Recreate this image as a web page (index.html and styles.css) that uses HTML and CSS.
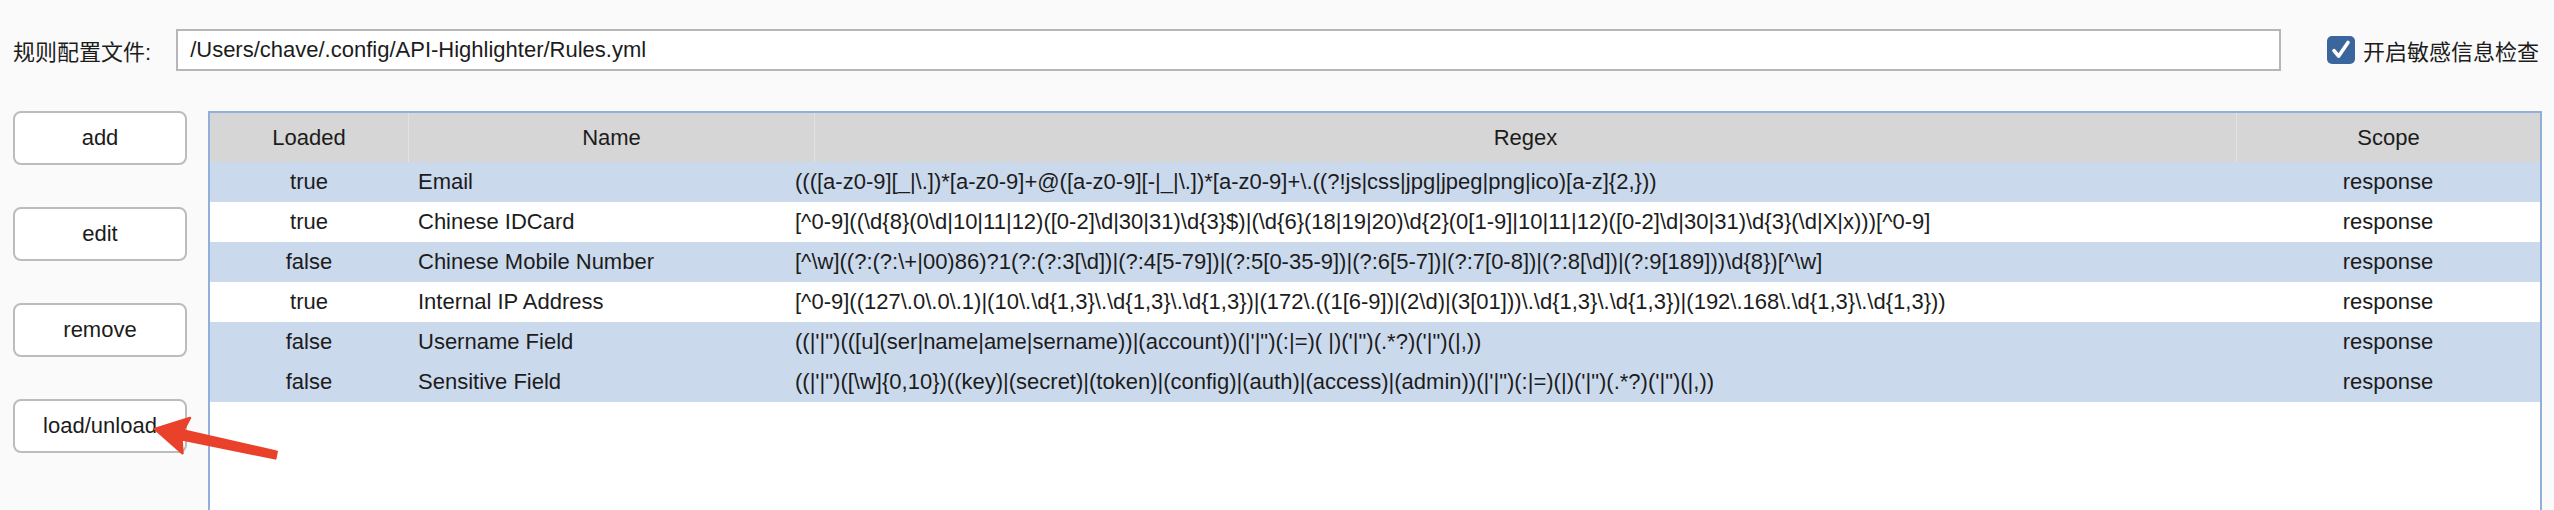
FILE: index.html
```html
<!DOCTYPE html>
<html lang="zh">
<head>
<meta charset="utf-8">
<title>API-Highlighter Rules</title>
<link rel="stylesheet" href="styles.css">
</head>
<body>
<div class="topbar">
  <span class="label">规则配置文件:</span>
  <div class="path-input">/Users/chave/.config/API-Highlighter/Rules.yml</div>
  <label class="check">
    <span class="box"><svg viewBox="0 0 28 28" width="28" height="28"><path d="M7 14.6 L11.6 20.2 L21 6.4" fill="none" stroke="#fff" stroke-width="3.6" stroke-linecap="round" stroke-linejoin="round"/></svg></span>
    <span class="check-text">开启敏感信息检查</span>
  </label>
</div>
<div class="main">
  <div class="buttons">
    <div class="btn">add</div>
    <div class="btn">edit</div>
    <div class="btn">remove</div>
    <div class="btn">load/unload</div>
  </div>
  <div class="table">
    <div class="thead">
      <div class="th">Loaded</div>
      <div class="th">Name</div>
      <div class="th">Regex</div>
      <div class="th">Scope</div>
    </div>
    <div class="row sel">
      <div class="c-loaded">true</div>
      <div class="c-name">Email</div>
      <div class="c-regex">((([a-z0-9][_|\.])*[a-z0-9]+@([a-z0-9][-|_|\.])*[a-z0-9]+\.((?!js|css|jpg|jpeg|png|ico)[a-z]{2,}))</div>
      <div class="c-scope">response</div>
    </div>
    <div class="row">
      <div class="c-loaded">true</div>
      <div class="c-name">Chinese IDCard</div>
      <div class="c-regex">[^0-9]((\d{8}(0\d|10|11|12)([0-2]\d|30|31)\d{3}$)|(\d{6}(18|19|20)\d{2}(0[1-9]|10|11|12)([0-2]\d|30|31)\d{3}(\d|X|x)))[^0-9]</div>
      <div class="c-scope">response</div>
    </div>
    <div class="row sel">
      <div class="c-loaded">false</div>
      <div class="c-name">Chinese Mobile Number</div>
      <div class="c-regex">[^\w]((?:(?:\+|00)86)?1(?:(?:3[\d])|(?:4[5-79])|(?:5[0-35-9])|(?:6[5-7])|(?:7[0-8])|(?:8[\d])|(?:9[189]))\d{8})[^\w]</div>
      <div class="c-scope">response</div>
    </div>
    <div class="row">
      <div class="c-loaded">true</div>
      <div class="c-name">Internal IP Address</div>
      <div class="c-regex">[^0-9]((127\.0\.0\.1)|(10\.\d{1,3}\.\d{1,3}\.\d{1,3})|(172\.((1[6-9])|(2\d)|(3[01]))\.\d{1,3}\.\d{1,3})|(192\.168\.\d{1,3}\.\d{1,3}))</div>
      <div class="c-scope">response</div>
    </div>
    <div class="row sel">
      <div class="c-loaded">false</div>
      <div class="c-name">Username Field</div>
      <div class="c-regex">((|'|")(([u](ser|name|ame|sername))|(account))(|'|")(:|=)( |)('|")(.*?)('|")(|,))</div>
      <div class="c-scope">response</div>
    </div>
    <div class="row sel">
      <div class="c-loaded">false</div>
      <div class="c-name">Sensitive Field</div>
      <div class="c-regex">((|'|")([\w]{0,10})((key)|(secret)|(token)|(config)|(auth)|(access)|(admin))(|'|")(:|=)(|)('|")(.*?)('|")(|,))</div>
      <div class="c-scope">response</div>
    </div>
  </div>
</div>
<svg class="arrow" viewBox="140 405 150 60" width="150" height="60">
  <polygon points="155,429 190,418 183.3,430.5 276.7,451.6 275.3,458.4 181.5,439.3 182.5,453.3" fill="#e9412a" stroke="#e9412a" stroke-width="2.5" stroke-linejoin="round"/>
</svg>
</body>
</html>
```
FILE: styles.css
```css
html, body {
  margin: 0;
  height: 510px;
  overflow: hidden;
}
body {
  position: relative;
  background: #fafafa;
  font-family: "Liberation Sans", Arial, "Noto Sans CJK SC", sans-serif;
  font-size: 22px;
  color: #1c1c1c;
}
.topbar {
  height: 100px;
  display: flex;
  align-items: center;
  padding: 0 15px 0 13px;
}
.label {
  flex: none;
  margin-right: 25px;
}
.path-input {
  flex: 1;
  box-sizing: border-box;
  height: 42px;
  border: 2px solid #b6b6b6;
  background: #fff;
  display: flex;
  align-items: center;
  padding-left: 12px;
}
.check {
  flex: none;
  margin-left: 46px;
  display: flex;
  align-items: center;
  gap: 8px;
}
.box {
  width: 28px;
  height: 28px;
  border-radius: 5px;
  background: #3b659d;
  display: flex;
}
.check-text {
  color: #1c1c1c;
}
.main {
  display: flex;
  gap: 21px;
  padding: 11px 12px 0 13px;
}
.buttons {
  flex: none;
  width: 174px;
  display: flex;
  flex-direction: column;
  gap: 42px;
}
.btn {
  height: 54px;
  box-sizing: border-box;
  border: 2px solid #bcbcbc;
  border-radius: 8px;
  background: #fff;
  display: flex;
  align-items: center;
  justify-content: center;
}
.table {
  flex: 1;
  height: 420px;
  border: 2px solid #91afdb;
  border-bottom: none;
  background: #fff;
}
.thead, .row {
  display: grid;
}
.thead {
  grid-template-columns: 198px 406px 1fr 304px;
  height: 49px;
  background: #d6d6d6;
}
.th {
  display: flex;
  align-items: center;
  justify-content: center;
  border-left: 1px solid #e2e2e2;
}
.th:first-child {
  border-left: none;
}
.row {
  grid-template-columns: 198px 385px 1fr 304px;
  height: 40px;
  align-items: center;
  background: #fff;
}
.row.sel {
  background: #cbd9ec;
}
.row > div {
  white-space: nowrap;
  overflow: hidden;
}
.c-loaded, .c-scope {
  text-align: center;
}
.c-name {
  padding-left: 10px;
}
.c-regex {
  padding-left: 2px;
}
.arrow {
  position: absolute;
  left: 140px;
  top: 405px;
}
```
